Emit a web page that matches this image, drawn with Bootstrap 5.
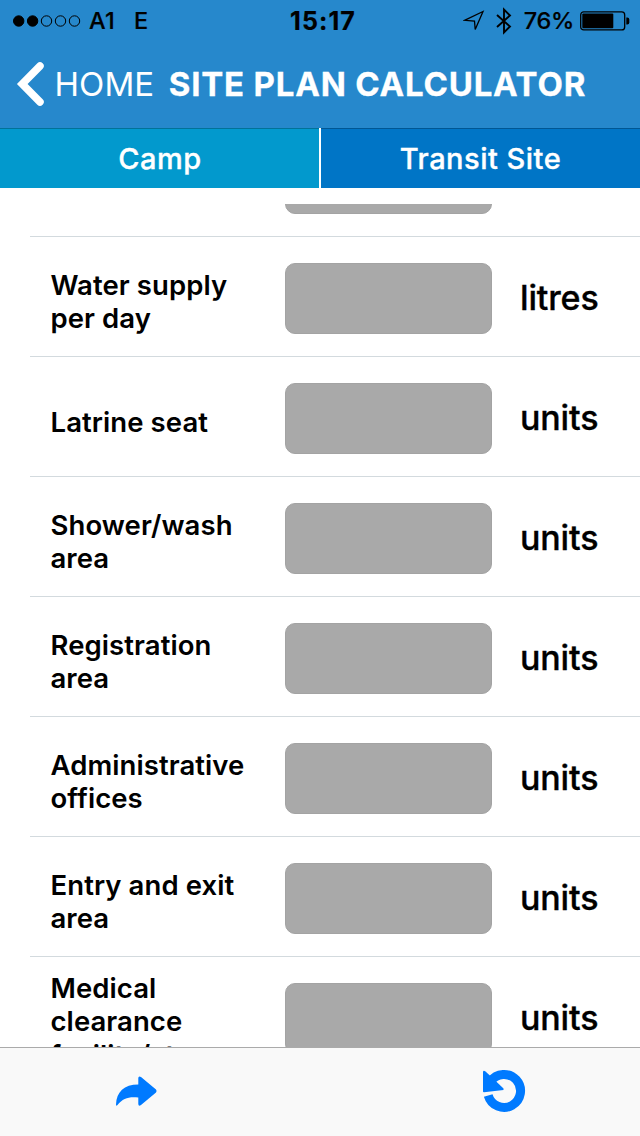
<!DOCTYPE html>
<html lang="en">
<head>
<meta charset="utf-8">
<meta name="viewport" content="width=device-width, initial-scale=1">
<title>Site Plan Calculator</title>
<link href="https://cdn.jsdelivr.net/npm/bootstrap@5.3.0/dist/css/bootstrap.min.css" rel="stylesheet">
<style>
body{font-family:Inter,"Liberation Sans",sans-serif;color:#000;height:1136px}
.topbar{background:#2688cc;height:128px}
.statusbar{height:40px;font-size:23.5px;font-weight:500;line-height:40px;display:grid;grid-template-columns:1fr auto 1fr;padding:0 10px 0 12px;-webkit-text-stroke:.2px #000}
.clock{font-weight:700;font-size:25px;letter-spacing:1.1px;padding:1px 0 0 4px}
.carrier{margin-left:7px;letter-spacing:.3px}
.network{margin-left:19px}
.bt{margin-left:9.5px}
.percent{margin-left:11px;letter-spacing:-.3px;padding-top:1px}
.batt{margin-left:6px}
.titlebar{height:88px;color:#fff;padding-left:16px}
.back-label{font-size:33px;line-height:88px;margin-left:10.5px;letter-spacing:.1px}
.page-title{font-size:33px;line-height:88px;font-weight:700;margin-left:14.5px;letter-spacing:.8px;-webkit-text-stroke:.3px #fff}
.tabs{height:60px;background:#fff;gap:2px}
.tab-btn{color:#fff;font-size:29px;font-weight:500;line-height:61px;flex:1;text-align:center;border:0;padding:0;box-shadow:inset 0 1px rgba(0,0,0,.25);letter-spacing:.5px;-webkit-text-stroke:.35px #fff}
.tab-camp{background:#0299cd;flex:0 0 319px;padding-left:1px}
.tab-transit{background:#0075c6}
.rows{margin-top:16px;height:843px}
.calc-row{height:120px;margin-left:30px;border-bottom:1px solid #d3dade;padding-left:20.5px;flex:none}
.calc-row.cut{margin-top:-87px}
.calc-label{width:234.5px;font-size:27.5px;line-height:33px;font-weight:600;padding-top:11px;letter-spacing:.08px}
.calc-label.tall{padding-top:10px}
.last-line{padding-top:1px}
.calc-value{width:207px;height:71px;border-radius:10px;background:#a9a9a9;margin-top:3px;border:1px solid #a3a3a3}
.calc-unit{margin-left:28px;font-size:34px;font-weight:500;line-height:40px;padding-top:2px;letter-spacing:-.15px;-webkit-text-stroke:.35px #000}
.toolbar{height:89px;background:#f9f9f9;border-top:1px solid #aaa}
</style>
</head>
<body class="d-flex flex-column overflow-hidden bg-white">
<header class="topbar flex-shrink-0">
  <div class="statusbar">
    <div class="d-flex align-items-center">
      <svg width="70" height="14" viewBox="0 0 70 14"><g stroke="#000"><circle cx="6.7" cy="7" r="5.2"/><circle cx="20.6" cy="7" r="5.2"/><g fill="none"><circle cx="34.5" cy="7" r="5.2"/><circle cx="48.5" cy="7" r="5.2"/><circle cx="62.5" cy="7" r="5.2"/></g></g></svg>
      <span class="carrier">A1</span><span class="network">E</span>
    </div>
    <span class="clock">15:17</span>
    <div class="d-flex align-items-center justify-content-end">
      <svg width="22" height="22" viewBox="0 0 22 22" fill="none" stroke="#000" stroke-width="1.3"><path d="M1.5 10.3 20 1.5 12.2 19.5 11.5 11Z"/></svg>
      <svg class="bt" width="18" height="28" viewBox="0 0 18 28" fill="none" stroke="#000" stroke-width="1.9"><path d="M2 8 15 19.5 9 25.5V2.5L15 8.5 2 20"/></svg>
      <span class="percent">76%</span>
      <svg class="batt" width="50" height="20" viewBox="0 0 50 20"><rect x=".7" y=".9" width="44" height="18" rx="3" fill="none" stroke="#000" stroke-width="1.3"/><rect x="2.3" y="2.5" width="31" height="14.8" rx="1"/><path d="M46.3 6.5h1a2 2 0 0 1 2 2v3a2 2 0 0 1-2 2h-1z"/></svg>
    </div>
  </div>
  <nav class="titlebar d-flex align-items-center text-nowrap">
    <svg width="28" height="44" viewBox="0 0 28 44" fill="none" stroke="#fff" stroke-width="7.5" stroke-linecap="round" stroke-linejoin="miter"><path d="M24 4 6.2 22 24 40"/></svg>
    <span class="back-label">HOME</span><span class="page-title">SITE PLAN CALCULATOR</span>
  </nav>
</header>
<div class="tabs d-flex flex-shrink-0">
  <button class="tab-btn tab-camp"><span>Camp</span></button>
  <button class="tab-btn tab-transit"><span>Transit Site</span></button>
</div>
<main class="rows d-flex flex-column overflow-hidden flex-shrink-0">
  <div class="calc-row cut d-flex align-items-center"><div class="calc-label"></div><div class="calc-value"></div></div>
  <div class="calc-row d-flex align-items-center"><div class="calc-label">Water supply<br>per day</div><div class="calc-value"></div><div class="calc-unit">litres</div></div>
  <div class="calc-row d-flex align-items-center"><div class="calc-label">Latrine seat</div><div class="calc-value"></div><div class="calc-unit">units</div></div>
  <div class="calc-row d-flex align-items-center"><div class="calc-label">Shower/wash<br>area</div><div class="calc-value"></div><div class="calc-unit">units</div></div>
  <div class="calc-row d-flex align-items-center"><div class="calc-label">Registration<br>area</div><div class="calc-value"></div><div class="calc-unit">units</div></div>
  <div class="calc-row d-flex align-items-center"><div class="calc-label">Administrative<br>offices</div><div class="calc-value"></div><div class="calc-unit">units</div></div>
  <div class="calc-row d-flex align-items-center"><div class="calc-label">Entry and exit<br>area</div><div class="calc-value"></div><div class="calc-unit">units</div></div>
  <div class="calc-row d-flex align-items-center"><div class="calc-label tall">Medical<br>clearance<span class="last-line d-block">facility/store</span></div><div class="calc-value"></div><div class="calc-unit">units</div></div>
</main>
<footer class="toolbar d-flex flex-shrink-0">
  <svg width="640" height="88" viewBox="0 1048 640 88" fill="#007aff">
    <path d="M116 1104.5C116.5 1092 124 1084.5 138.3 1084.5V1078Q138.5 1075.5 141 1077L156 1089.5Q157.2 1091 156 1092.5L141 1105Q138.5 1106.7 138.3 1104V1097.5C129 1096.5 123 1098 117.5 1105Q116 1106.5 116 1104.5Z"/>
    <path fill="none" stroke="#007aff" stroke-width="9" d="M490.5 1081.5A16.5 16.5 0 1 1 488.2 1095.5"/>
    <path d="M483 1072Q483.3 1070 485.5 1071.5L491 1076.5 503.5 1088.5V1090L484 1092.3Q483 1092.3 483 1091.5Z"/>
  </svg>
</footer>
<script src="https://cdn.jsdelivr.net/npm/bootstrap@5.3.0/dist/js/bootstrap.bundle.min.js"></script>
</body>
</html>
